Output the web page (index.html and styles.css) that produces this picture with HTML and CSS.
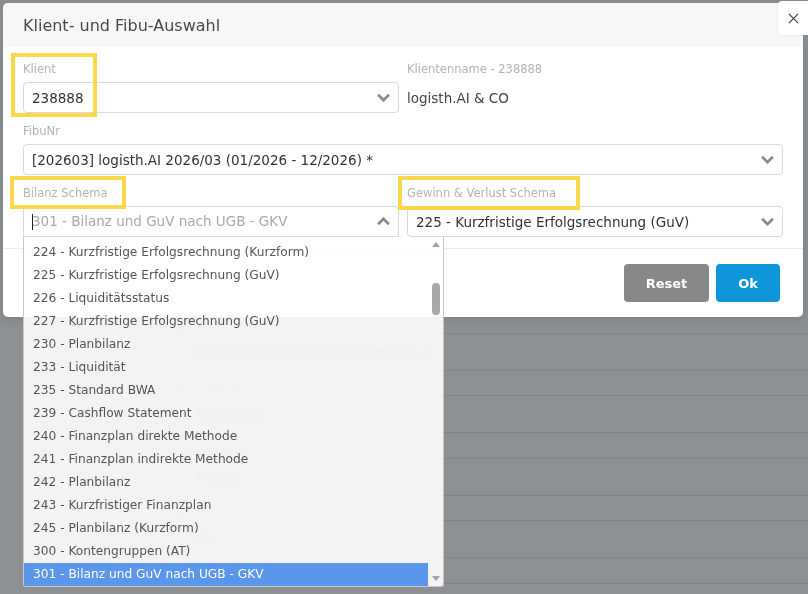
FILE: index.html
```html
<!DOCTYPE html>
<html lang="de">
  <head>
    <meta charset="UTF-8" />
    <title>Klient- und Fibu-Auswahl</title>
    <link rel="stylesheet" href="styles.css">
  </head>
  <body>
    <!-- page behind the dialog -->
    <div class="page">
      <div class="page-form">
        <div class="page-row page-label">Email</div>
        <div class="page-row page-value">
          <div class="page-input">margarita.molina-carrero@kion.at</div>
        </div>
        <div class="page-row page-label">Vorname*</div>
        <div class="page-row page-value">Margarita</div>
        <div class="page-row page-label">Nachname*</div>
        <div class="page-row page-value">Molina</div>
        <div class="page-row page-label">Beruf</div>
        <div class="page-row page-value">DI</div>
        <div class="page-row page-label">Telefonnummer</div>
      </div>
    </div>

    <div class="backdrop"></div>

    <div class="modal">
      <div class="modal-header">
        <h5 class="modal-title">Klient- und Fibu-Auswahl</h5>
      </div>

      <div class="modal-body">
        <div class="row2">
          <div class="field">
            <label class="field-label">Klient</label>
            <div class="select">
              <span class="value">238888</span>
              <svg class="chevron" viewBox="0 0 16 10"><path d="M2 2 L8 8 L14 2" /></svg>
            </div>
          </div>
          <div class="field">
            <label class="field-label">Klientenname - 238888</label>
            <div class="static">logisth.AI &amp; CO</div>
          </div>
        </div>

        <div class="field">
          <label class="field-label">FibuNr</label>
          <div class="select">
            <span class="value">[202603] logisth.AI 2026/03 (01/2026 - 12/2026) *</span>
            <svg class="chevron" viewBox="0 0 16 10"><path d="M2 2 L8 8 L14 2" /></svg>
          </div>
        </div>

        <div class="row2 last">
          <div class="field">
            <label class="field-label">Bilanz Schema</label>
            <div class="select open">
              <span class="value"><span class="caret"></span>301 - Bilanz und GuV nach UGB - GKV</span>
              <svg class="chevron" viewBox="0 0 16 10"><path d="M2 8 L8 2 L14 8" /></svg>
            </div>
            <div class="dropdown">
              <ul class="dropdown-list">
                <li>224 - Kurzfristige Erfolgsrechnung (Kurzform)</li>
                <li>225 - Kurzfristige Erfolgsrechnung (GuV)</li>
                <li>226 - Liquiditätsstatus</li>
                <li>227 - Kurzfristige Erfolgsrechnung (GuV)</li>
                <li>230 - Planbilanz</li>
                <li>233 - Liquidität</li>
                <li>235 - Standard BWA</li>
                <li>239 - Cashflow Statement</li>
                <li>240 - Finanzplan direkte Methode</li>
                <li>241 - Finanzplan indirekte Methode</li>
                <li>242 - Planbilanz</li>
                <li>243 - Kurzfristiger Finanzplan</li>
                <li>245 - Planbilanz (Kurzform)</li>
                <li>300 - Kontengruppen (AT)</li>
                <li class="active">301 - Bilanz und GuV nach UGB - GKV</li>
              </ul>
              <div class="scrollbar">
                <div class="sb-arrow"><span class="tri-up"></span></div>
                <div class="sb-track"><div class="sb-thumb"></div></div>
                <div class="sb-arrow"><span class="tri-down"></span></div>
              </div>
            </div>
          </div>
          <div class="field">
            <label class="field-label">Gewinn &amp; Verlust Schema</label>
            <div class="select">
              <span class="value">225 - Kurzfristige Erfolgsrechnung (GuV)</span>
              <svg class="chevron" viewBox="0 0 16 10"><path d="M2 2 L8 8 L14 2" /></svg>
            </div>
          </div>
        </div>
      </div>

      <div class="modal-footer">
        <button class="btn btn-reset">Reset</button>
        <button class="btn btn-ok">Ok</button>
      </div>

      <!-- yellow annotation boxes -->
      <span class="mark mark-klient"></span>
      <span class="mark mark-bilanz"></span>
      <span class="mark mark-guv"></span>
    </div>

    <button class="close-btn">
      <svg viewBox="0 0 12 12"><path d="M1 1 L11 11 M11 1 L1 11" /></svg>
    </button>
  </body>
</html>
```

FILE: styles.css
```css
* {
  box-sizing: border-box;
}

body {
  margin: 0;
  width: 808px;
  height: 594px;
  overflow: hidden;
  background: #fff;
  font-family: "DejaVu Sans", sans-serif;
}

/* page behind the dialog */
.page {
  padding-top: 308px;
}

.page-form {
  margin-left: 180px;
  border-left: 1px solid #e2e5e8;
}

.page-row {
  border-bottom: 1px solid #e2e5e8;
}

.page-label {
  height: 25.5px;
  padding-top: 11px;
  font-size: 12px;
  line-height: 14px;
  color: #c3c8cc;
}

.page-value {
  height: 37px;
  display: flex;
  align-items: center;
  padding-left: 14px;
  font-size: 14px;
  color: #a3a9ae;
}

.page-input {
  margin-left: -15px;
  width: 262px;
  height: 33px;
  padding-left: 14px;
  border: 1px solid #e6e9ec;
  border-radius: 4px;
  display: flex;
  align-items: center;
}

.backdrop {
  position: fixed;
  top: 0;
  left: 0;
  right: 0;
  bottom: 0;
  background: rgba(28, 34, 40, 0.5);
}

/* dialog */
.modal {
  position: fixed;
  top: 3px;
  left: 3px;
  width: 800px;
  background: #fff;
  border-radius: 5px;
  box-shadow: 0 2px 8px rgba(0, 0, 0, 0.12);
}

.modal-header {
  height: 44px;
  padding: 0 20px;
  background: #f7f7f7;
  border-radius: 5px 5px 0 0;
  display: flex;
  align-items: center;
}

.modal-title {
  margin: 0;
  font-size: 16px;
  font-weight: normal;
  color: #4a4a4a;
}

.modal-body {
  padding: 14px 20px 11px;
}

.row2 {
  display: grid;
  grid-template-columns: 1fr 1fr;
  gap: 8px;
}

.field {
  position: relative;
  margin-bottom: 10px;
}

.row2.last .field {
  margin-bottom: 0;
}

.field-label {
  display: block;
  font-size: 11.5px;
  line-height: 16px;
  margin-bottom: 5px;
  color: #b3b3b3;
}

.select {
  height: 31px;
  padding: 0 7px 0 8px;
  border: 1px solid #d9d9d9;
  border-radius: 4px;
  display: flex;
  align-items: center;
  font-size: 13.5px;
  color: #333;
}

.select .value {
  flex: 1;
  white-space: nowrap;
}

.select.open {
  border-radius: 4px 4px 0 0;
}

.select.open .value {
  color: #a8a8a8;
}

.caret {
  display: inline-block;
  width: 1px;
  height: 16px;
  margin-right: -1px;
  background: #222;
  vertical-align: middle;
}

.chevron {
  width: 15px;
  height: 9px;
}

.chevron path {
  fill: none;
  stroke: #8a8a8a;
  stroke-width: 3;
}

.static {
  height: 31px;
  display: flex;
  align-items: center;
  font-size: 13.5px;
  color: #444;
}

/* open list of Bilanz Schema */
.dropdown {
  position: absolute;
  top: 100%;
  left: 0;
  width: 421px;
  height: 350px;
  display: flex;
  border: 1px solid #c8c8c8;
  border-top: 0;
  border-radius: 0 0 3px 3px;
  background: rgba(255, 255, 255, 0.9);
  z-index: 5;
}

.dropdown-list {
  flex: 1;
  list-style: none;
  margin: 0;
  padding: 4px 0 0;
}

.dropdown-list li {
  height: 23px;
  line-height: 23px;
  padding: 0 9px;
  font-size: 12.2px;
  color: #555;
  white-space: nowrap;
}

.dropdown-list li.active {
  background: #5a96ea;
  color: #fff;
}

.scrollbar {
  width: 15px;
  display: flex;
  flex-direction: column;
  align-items: center;
}

.sb-arrow {
  height: 15px;
  width: 15px;
  display: flex;
  align-items: center;
  justify-content: center;
}

.tri-up {
  border-left: 4px solid transparent;
  border-right: 4px solid transparent;
  border-bottom: 5px solid #a3a3a3;
}

.tri-down {
  border-left: 4px solid transparent;
  border-right: 4px solid transparent;
  border-top: 5px solid #a3a3a3;
}

.sb-track {
  flex: 1;
  padding-top: 31px;
}

.sb-thumb {
  width: 8px;
  height: 32px;
  border-radius: 4px;
  background: #a8a8a8;
}

.modal-footer {
  border-top: 1px solid #ececec;
  padding: 15px 23px 15px 0;
  display: flex;
  justify-content: flex-end;
  gap: 7px;
}

.btn {
  height: 38px;
  border: none;
  border-radius: 4px;
  color: #fff;
  font-family: "DejaVu Sans", sans-serif;
  font-size: 13px;
  font-weight: bold;
  padding: 0;
}

.btn-reset {
  width: 85px;
  background: #86888a;
}

.btn-ok {
  width: 64px;
  background: #0f96da;
}

.mark {
  position: absolute;
  border: 4px solid #fad84b;
}

.mark-klient {
  left: 8px;
  top: 50px;
  width: 86px;
  height: 64px;
}

.mark-bilanz {
  left: 7px;
  top: 173px;
  width: 116px;
  height: 33px;
}

.mark-guv {
  left: 395px;
  top: 173px;
  width: 182px;
  height: 34px;
}

.close-btn {
  position: fixed;
  top: 1px;
  left: 778px;
  width: 34px;
  height: 34px;
  border: none;
  border-radius: 4px;
  background: #fff;
  box-shadow: 0 0 3px rgba(0, 0, 0, 0.1);
  display: flex;
  align-items: center;
  justify-content: center;
  padding: 0 4px 0 0;
}

.close-btn svg {
  width: 11px;
  height: 11px;
}

.close-btn path {
  stroke: #444;
  stroke-width: 1.4;
}
```
